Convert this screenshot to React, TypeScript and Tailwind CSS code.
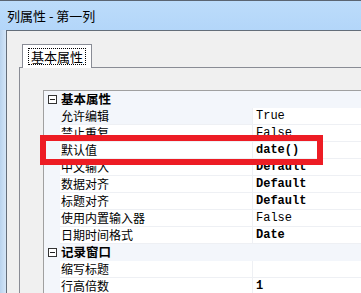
import React from "react";

type Row =
  | { kind: "cat"; label: string }
  | { kind: "prop"; label: string; value: string; bold?: boolean; shaded?: boolean };

const rows: Row[] = [
  { kind: "cat", label: "基本属性" },
  { kind: "prop", label: "允许编辑", value: "True", shaded: true },
  { kind: "prop", label: "禁止重复", value: "False" },
  { kind: "prop", label: "默认值", value: "date()", bold: true },
  { kind: "prop", label: "中文输入", value: "Default", bold: true },
  { kind: "prop", label: "数据对齐", value: "Default", bold: true },
  { kind: "prop", label: "标题对齐", value: "Default", bold: true },
  { kind: "prop", label: "使用内置输入器", value: "False" },
  { kind: "prop", label: "日期时间格式", value: "Date", bold: true },
  { kind: "cat", label: "记录窗口" },
  { kind: "prop", label: "缩写标题", value: "" },
  { kind: "prop", label: "行高倍数", value: "1", bold: true },
];

const cjk = "font-['SimSun','Noto_Sans_CJK_SC',sans-serif]";
const mono = "font-['Liberation_Mono','Noto_Sans_CJK_SC',monospace]";

function MinusBox() {
  return (
    <div className="w-[9px] h-[9px] border border-[#333] bg-white flex items-center justify-center">
      <div className="w-[5px] h-px bg-[#222]" />
    </div>
  );
}

function GridRow({ row }: { row: Row }) {
  if (row.kind === "cat") {
    return (
      <div className="flex h-[17px] bg-[#f3f6fb]">
        <div className="w-[16px] flex items-center justify-center">
          <MinusBox />
        </div>
        <div className={`pl-px text-[12.5px] leading-[16px] font-bold text-black ${cjk}`}>
          {row.label}
        </div>
      </div>
    );
  }
  return (
    <div className="flex h-[17px]">
      <div className="w-[16px] bg-[#f3f6fb]" />
      <div
        className={`w-[193px] pl-px border-b border-r border-[#eef0f4] text-[12px] leading-[16px] text-black whitespace-nowrap ${cjk} ${
          row.shaded ? "bg-[#f3f6fb]" : "bg-white"
        }`}
      >
        {row.label}
      </div>
      <div
        className={`flex-1 pl-[3px] bg-white border-b border-[#eef0f4] text-[12px] leading-[16px] text-black ${mono} ${
          row.bold ? "font-bold" : ""
        }`}
      >
        {row.value}
      </div>
    </div>
  );
}

export default function App() {
  return (
    <div className="relative w-[361px] h-[293px] overflow-hidden flex flex-col bg-[#cfe2f6]">
      <div className="h-[30px] shrink-0 border-t border-[#5b6572] bg-gradient-to-b from-[#bcdcfb] to-[#b3d6f9] flex items-center pl-[7px]">
        <span className={`text-[13px] text-black ${cjk}`}>列属性 - 第一列</span>
      </div>
      <div className="flex flex-1 min-h-0">
        <div className="w-[6px] shrink-0 bg-gradient-to-r from-[#b9d3ee] to-[#d4e6f8]" />
        <div className="flex-1 flex flex-col bg-[#f0f0f0] border-l border-t border-[#646e7a] pl-[12px] pt-[13px]">
          <div className="flex ml-[3px]">
            <div className="relative z-10 -mb-px w-[70px] h-[24px] bg-white border border-b-0 border-[#898c95] flex items-start justify-center pt-[3px]">
              <span
                className={`px-[2px] border border-dotted border-black text-[13px] leading-[15px] text-black ${cjk}`}
              >
                基本属性
              </span>
            </div>
          </div>
          <div className="flex-1 flex flex-col border-l border-t border-[#898c95] pl-[23px] pt-[22px]">
            <div className="flex-1 border-l border-t border-[#a0a0a0] bg-white flex flex-col">
              {rows.map((row, i) => (
                <GridRow key={i} row={row} />
              ))}
            </div>
          </div>
        </div>
      </div>
      <div className="absolute left-[40px] top-[135px] w-[283px] h-[30px] border-[6px] border-[#ed1c24]" />
    </div>
  );
}
